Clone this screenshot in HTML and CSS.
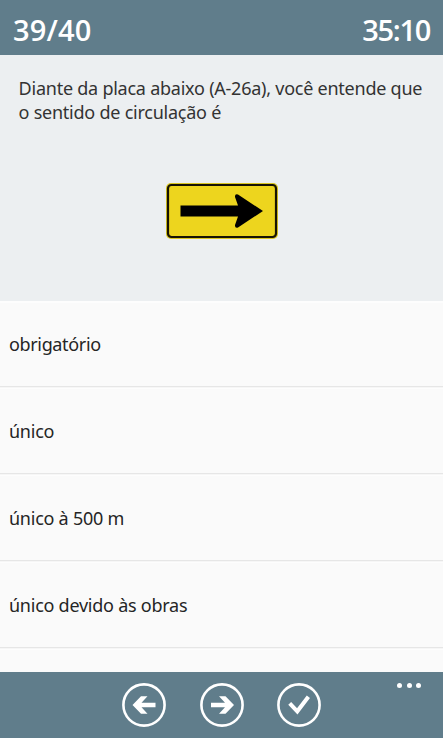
FILE: index.html
```html
<!DOCTYPE html>
<html lang="pt-BR">
<head>
<meta charset="utf-8">
<title>Simulado</title>
<link rel="stylesheet" href="styles.css">
</head>
<body>
<div class="app">
  <header class="topbar"><span class="count">39/40</span><span class="timer">35:10</span></header>
  <section class="question">
    <p class="prompt">Diante da placa abaixo (A-26a), você entende que<br>o sentido de circulação é</p>
    <svg class="sign" width="112" height="56" viewBox="0 0 112 56">
      <rect width="112" height="56" rx="5" fill="#d9c522"/>
      <rect x="2" y="2" width="108" height="52" rx="3.500" fill="#edd51e" stroke="#171303" stroke-width="2.200"/>
      <path d="M14.500 22.500H72L69 14Q68.700 10.500 72 11.500L97 28L72 44.500Q68.700 45.500 69 42L72 33.500H14.500Z" fill="#000"/>
    </svg>
  </section>
  <ul class="answers">
    <li>obrigatório</li>
    <li>único</li>
    <li>único à 500 m</li>
    <li>único devido às obras</li>
    <li></li>
  </ul>
  <footer class="appbar">
    <svg class="icon" viewBox="0 0 44 44"><circle cx="22" cy="22" r="20.600"/><path class="solid" d="M10.500 22L19 13.200H25.500L19.500 19.800H33.500V24.200H19.500L25.500 30.800H19Z"/></svg>
    <svg class="icon" viewBox="0 0 44 44"><circle cx="22" cy="22" r="20.600"/><path class="solid" d="M34 22L25.500 13.200H19L25 19.800H11V24.200H25L19 30.800H25.500Z"/></svg>
    <svg class="icon" viewBox="0 0 44 44"><circle cx="22" cy="22" r="20.600"/><path class="check" d="M12.700 20.300L20.300 28.300L31.400 13.700"/></svg>
    <div class="more"><i></i><i></i><i></i></div>
  </footer>
</div>
</body>
</html>
```
FILE: styles.css
```css
* { box-sizing: border-box; }
body { margin: 0; font-family: "Noto Sans", "Open Sans", sans-serif; background: #fafafa; }
.app { height: 738px; display: flex; flex-direction: column; overflow: hidden; }
.topbar { flex: 0 0 55px; display: flex; justify-content: space-between; padding: 10px 13px 0 13px; background: #607d8b; color: #fff; font-family: "Open Sans", "Noto Sans", sans-serif; font-size: 29px; line-height: 40px; font-weight: 600; }
.count { letter-spacing: 0.150px; }
.timer { letter-spacing: -1.300px; }
.question { flex: 0 0 246px; padding: 21px 0 0 18.600px; background: #eceff1; }
.prompt { margin: 0; height: 107px; color: #333; font-size: 18px; line-height: 24px; letter-spacing: -0.240px; white-space: nowrap; }
.sign { display: block; margin-left: 147px; }
.answers { flex: 1; min-height: 0; overflow: hidden; list-style: none; margin: 0; padding: 0; }
.answers li { height: 87px; display: flex; align-items: center; padding: 2px 0 0 9px; border-bottom: 1px solid #e6e6e6; background: #fafafa; box-shadow: inset 0 1px #f6f6f6, inset 0 2px #fdfdfd; color: #252525; font-size: 18px; line-height: 24px; letter-spacing: -0.250px; }
.answers li:first-child { height: 86px; padding-top: 0; box-shadow: inset 0 2px #fdfdfd; letter-spacing: -0.350px; }
.appbar { flex: 0 0 66px; position: relative; display: flex; gap: 33.500px; padding: 11px 0 0 122px; background: #607d8b; }
.icon { width: 44px; height: 44px; fill: none; stroke: #fff; stroke-width: 2.600; }
.icon .solid { fill: #fff; stroke: none; }
.icon .check { stroke-width: 4; }
.more { position: absolute; top: 11px; right: 22px; display: flex; gap: 4.500px; }
.more i { width: 5px; height: 5px; border-radius: 50%; background: #fff; }
```
